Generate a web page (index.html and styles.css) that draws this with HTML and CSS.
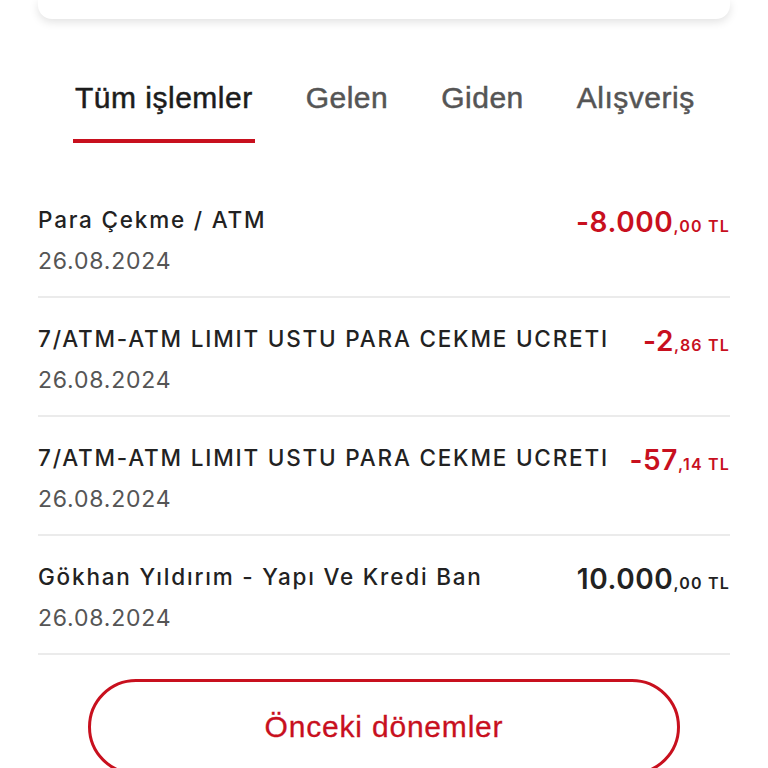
FILE: index.html
```html
<!DOCTYPE html>
<html lang="tr">
<head>
  <meta charset="UTF-8">
  <meta name="viewport" content="width=device-width, initial-scale=1.0">
  <title>Hesap hareketleri</title>
  <link rel="stylesheet" href="styles.css">
</head>
<body>
  <div class="page">
    <div class="summary-card"></div>

    <nav class="tabs">
      <a class="tab active">Tüm işlemler</a>
      <a class="tab">Gelen</a>
      <a class="tab">Giden</a>
      <a class="tab">Alışveriş</a>
    </nav>

    <ul class="tx-list">
      <li class="tx">
        <div class="tx-info">
          <div class="tx-title">Para Çekme / ATM</div>
          <div class="tx-date">26.08.2024</div>
        </div>
        <div class="tx-amount neg">-8.000<small>,00 TL</small></div>
      </li>
      <li class="tx">
        <div class="tx-info">
          <div class="tx-title">7/ATM-ATM LIMIT USTU PARA CEKME UCRETI</div>
          <div class="tx-date">26.08.2024</div>
        </div>
        <div class="tx-amount neg">-2<small>,86 TL</small></div>
      </li>
      <li class="tx">
        <div class="tx-info">
          <div class="tx-title">7/ATM-ATM LIMIT USTU PARA CEKME UCRETI</div>
          <div class="tx-date">26.08.2024</div>
        </div>
        <div class="tx-amount neg">-57<small>,14 TL</small></div>
      </li>
      <li class="tx">
        <div class="tx-info">
          <div class="tx-title">Gökhan Yıldırım - Yapı Ve Kredi Ban</div>
          <div class="tx-date">26.08.2024</div>
        </div>
        <div class="tx-amount">10.000<small>,00 TL</small></div>
      </li>
    </ul>

    <div class="more">
      <button class="more-btn">Önceki dönemler</button>
    </div>
  </div>
</body>
</html>
```

FILE: styles.css
```css
html, body {
  margin: 0;
  padding: 0;
  background: #fff;
  overflow: hidden;
}
.page {
  width: 768px;
  height: 768px;
  padding: 0 38px;
  box-sizing: border-box;
}
/* bottom of the balance card above the list */
.summary-card {
  height: 19px;
  background: #fff;
  border-radius: 0 0 14px 14px;
  box-shadow: 0 3px 10px rgba(0, 0, 0, 0.12);
}
.tabs {
  display: flex;
  gap: 49px;
  padding: 62px 0 0 35px;
  font-family: "Liberation Sans", Arial, sans-serif;
}
.tab {
  font-size: 30px;
  letter-spacing: 0.5px;
  line-height: 34px;
  color: #555;
  -webkit-text-stroke: 0.5px currentColor;
  padding: 0 2px 24px;
  border-bottom: 4px solid transparent;
}
.tab.active {
  color: #1c1c1c;
  border-bottom-color: #c8101e;
}
.tx-list {
  list-style: none;
  margin: 36px 0 0;
  padding: 0;
  font-family: Inter, "Noto Sans", sans-serif;
}
.tx {
  display: flex;
  justify-content: space-between;
  align-items: flex-start;
  gap: 20px;
  height: 119px;
  padding-top: 27px;
  box-sizing: border-box;
  border-bottom: 2px solid #ebebeb;
}
.tx-title {
  font-size: 22.5px;
  font-weight: 500;
  letter-spacing: 1.8px;
  color: #222;
  line-height: 28px;
  white-space: nowrap;
}
.tx-date {
  margin-top: 13px;
  font-size: 23px;
  letter-spacing: 0.8px;
  color: #555;
  line-height: 28px;
}
.tx-amount {
  font-size: 28px;
  font-weight: 600;
  letter-spacing: 0.6px;
  color: #222;
  line-height: 32px;
  white-space: nowrap;
}
.tx-amount small {
  font-size: 16px;
  letter-spacing: 1.2px;
}
.tx-amount.neg {
  color: #c8101e;
}
.more {
  padding: 24px 50px 0;
}
.more-btn {
  display: block;
  width: 100%;
  height: 96px;
  background: #fff;
  border: 3px solid #c8101e;
  border-radius: 48px;
  color: #c8101e;
  font-family: "Liberation Sans", Arial, sans-serif;
  font-size: 30px;
  letter-spacing: 0.8px;
  -webkit-text-stroke: 0.3px currentColor;
  padding: 0;
}
```
